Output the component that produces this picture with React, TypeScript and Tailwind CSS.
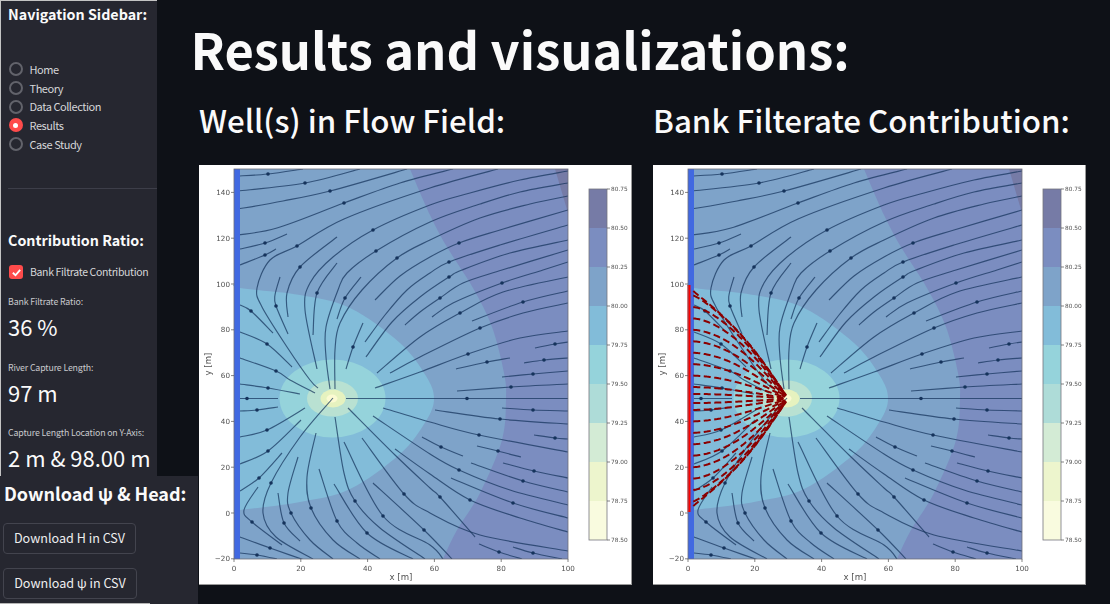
import React from "react";

const FONT = "font-['Noto_Sans_CJK_SC','Source_Sans_Pro',sans-serif]";

// ---------- flow-field chart (all coordinates are in page pixels of the picture) ----------
const toX = (px: number) => (px - 234) / 3.34;
const toY = (py: number) => (513 - py) / 2.29;
const fromX = (x: number) => 234 + 3.34 * x;
const fromY = (y: number) => 513 - 2.29 * y;
const K = 53.4;

function vel(x: number, y: number): [number, number] {
  const a = x - 30, b = y - 50, c = x + 30;
  const r1 = a * a + b * b, r2 = c * c + b * b;
  return [-1 + K * (-a / r1 + c / r2), K * (-b / r1 + b / r2)];
}

function trace(sx: number, sy: number): [number, number][] {
  let x = toX(sx), y = toY(sy);
  const out: [number, number][] = [[sx, sy]];
  for (let i = 0; i < 900; i++) {
    const [u, v] = vel(x, y);
    const n = Math.hypot(u * 3.34, v * 2.29) || 1;
    const h = 1.5 / n;
    const [u2, v2] = vel(x + (u * h) / 2, y + (v * h) / 2);
    x += u2 * h;
    y += v2 * h;
    if (x > 100 || y < -20 || y > 150) break;
    if (Math.hypot(x - 30, y - 50) < 1.2) break;
    out.push([fromX(x), fromY(y)]);
  }
  return out;
}

type P = [number, number];
const toD = (p: P[]) => p.map((q, i) => `${i ? "L" : "M"}${q[0].toFixed(1)} ${q[1].toFixed(1)}`).join("");

function smooth(p: P[]) {
  let d = `M${p[0][0]} ${p[0][1]}`;
  for (let i = 0; i < p.length - 1; i++) {
    const a = p[Math.max(i - 1, 0)], b = p[i], c = p[i + 1], e = p[Math.min(i + 2, p.length - 1)];
    d += `C${(b[0] + (c[0] - a[0]) / 6).toFixed(1)} ${(b[1] + (c[1] - a[1]) / 6).toFixed(1)} ${(c[0] - (e[0] - b[0]) / 6).toFixed(1)} ${(c[1] - (e[1] - b[1]) / 6).toFixed(1)} ${c[0]} ${c[1]}`;
  }
  return d;
}

const STREAMS: P[][] = [
  [[238,176],[268,174],[303,169]],
  [[238,191],[305,183],[360,169]],
  [[238,209],[283,201],[330,191],[407,169]],
  [[238,235],[277,228],[344,203],[400,183],[453,169]],
  [[240,249],[265,243],[287,234]],
  [[240,265],[265,255],[276,249]],
  [[498,169],[430,188],[344,219],[297,246],[270,260],[257,288],[262,307],[287,347],[310,380],[318,388]],
  [[568,171],[520,180],[470,193],[430,205],[373,230],[333,257],[310,283],[305,310],[317,369]],
  [[568,183],[520,192],[480,204],[430,222],[376,251],[347,273],[338,290],[326,327],[326,357],[330,389]],
  [[568,196],[530,204],[480,218],[430,240],[397,258],[362,290],[340,323],[335,350],[335,389]],
  [[568,210],[500,230],[459,243],[430,257],[400,276],[375,300]],
  [[568,225],[500,245],[449,262],[430,273],[407,290],[385,315],[365,342]],
  [[568,240],[510,253],[462,270],[449,277],[420,297],[392,322],[366,357]],
  [[568,250],[502,270],[463,283],[440,298],[420,312],[405,325]],
  [[568,262],[543,270],[502,283],[453,303],[432,317]],
  [[568,277],[503,292],[460,313],[420,337],[377,373]],
  [[568,291],[523,302],[472,321]],
  [[568,303],[523,313],[480,328],[420,357],[390,373]],
  [[568,331],[520,338],[468,354],[420,372],[375,388]],
  [[510,358],[487,362],[456,369]],
  [[568,342],[555,344],[535,348]],
  [[568,358],[544,360],[524,363]],
  [[568,371],[533,374],[502,377]],
  [[568,384],[511,387],[457,391]],
  [[568,398.5],[346,398.5]],
  [[337,237],[300,267],[287,293],[288,317]],
  [[280,277],[275,295],[276,306],[288,334]],
  [[337,263],[317,293],[313,335]],
  [[361,277],[345,298],[337,319]],
  [[363,323],[353,347],[346,369]],
  [[240,305],[251,311],[273,333]],
  [[240,332],[267,344],[292,367]],
  [[240,358],[276,371],[290,380],[315,393]],
  [[240,384],[268,388],[300,394]],
  [[240,398.5],[278,398.5]],
  [[240,411],[257,410],[278,407]],
  [[240,437],[267,430],[305,408]],
  [[240,464],[268,451],[301,420]],
  [[240,491],[259,478],[282,453]],
  [[258,487],[244,510],[252,522],[282,545]],
  [[333,398],[300,437],[271,483],[263,513],[276,537],[313,559]],
  [[278,493],[284,523],[300,541]],
  [[298,457],[288,493],[291,513],[310,540],[333,559]],
  [[316,433],[307,477],[311,508],[333,540],[360,559]],
  [[319,469],[337,521],[357,543],[380,559]],
  [[334,484],[367,533],[413,559]],
  [[335,417],[344,473],[355,501],[380,528],[425,559]],
  [[344,442],[383,516],[430,545],[443,559]],
  [[373,483],[424,530],[452,559]],
  [[362,438],[404,494],[430,513],[480,535],[568,551]],
  [[348,408],[395,455],[430,488],[440,497],[475,537]],
  [[373,416],[430,454],[459,470],[510,490],[568,505]],
  [[395,449],[430,474],[470,500],[520,518],[568,532]],
  [[451,478],[513,503],[568,518]],
  [[471,463],[523,481],[568,492]],
  [[503,463],[534,471],[568,478]],
  [[477,446],[498,451],[521,457]],
  [[534,435],[555,438],[568,439]],
  [[422,437],[441,447],[463,456]],
  [[435,410],[500,419],[568,424]],
  [[502,408],[533,410],[568,411]],
  [[383,408],[430,422],[479,435],[568,452]],
  [[240,537],[270,548],[313,563]],
  [[240,553],[257,555],[277,559]],
  [[479,544],[499,552],[522,559]],
  [[513,547],[533,553],[562,559]],
];

const DOTS: P[] = [
  [268,174],[305,183],[330,191],[344,203],[265,243],[265,255],[297,246],[373,230],[376,251],[397,258],
  [459,243],[449,262],[449,277],[440,298],[460,313],[502,283],[523,302],[480,328],[468,354],[487,362],
  [555,344],[544,360],[533,374],[511,387],[467,398.5],[300,267],[276,306],[317,293],[345,298],[353,347],
  [251,311],[267,344],[276,371],[268,388],[247,398.5],[257,410],[267,430],[268,451],[259,478],[252,522],
  [271,483],[284,523],[291,513],[311,508],[337,521],[367,533],[355,501],[383,516],[424,530],[404,494],
  [440,497],[459,470],[470,500],[513,503],[523,481],[534,471],[498,451],[555,438],[441,447],[500,419],
  [533,410],[479,435],[270,548],[257,555],[499,552],[533,553],
];

const streamPaths = STREAMS.map(smooth);
const captureYs = [97, 95, 90, 85, 80, 75, 70, 65, 60, 55, 52, 48, 45, 40, 35, 30, 25, 20, 15, 10, 5, 3];
const capturePaths = captureYs.map((y) => toD(trace(fromX(1.6), fromY(y))));

const c80 = smooth([[234,284],[240,288],[300,295],[350,308],[400,343],[426,376],[434,398.5],[426,421],[400,454],[350,489],[300,502],[240,510],[234,511]]) + "Z";
const c8025 = smooth([[410,169],[430,215],[447,247],[473,288],[492,327],[504,373],[506,398],[502,440],[480,493],[457,530],[443,559]]) + "L568 559L568 169Z";

const LEVELS = ["#767ba6", "#7b8dc0", "#7ea3c9", "#82bcd9", "#95d3db", "#aedcd8", "#d3ebd5", "#edf5cd", "#f9fbdf"];
const CB = ["80.75", "80.50", "80.25", "80.00", "79.75", "79.50", "79.25", "79.00", "78.75", "78.50"];
const XT = [0, 20, 40, 60, 80, 100];
const YT = [-20, 0, 20, 40, 60, 80, 100, 120, 140];
const TICK = "#505050";
const SANS = "'DejaVu Sans', sans-serif";

function FlowChart({ capture, id }: { capture?: boolean; id: string }) {
  return (
    <svg width="433" height="420" viewBox="199 165 433 420" className="block blur-[0.5px]" fontFamily={SANS}>
      <defs>
        <clipPath id={id}><rect x="234" y="169" width="334" height="390" /></clipPath>
      </defs>
      <rect x="234" y="169" width="334" height="390" fill="#7ea3c9" />
      <path d={c8025} fill="#7b8dc0" />
      <path d="M555 169L568 213L568 169Z" fill="#767ba6" />
      <path d={c80} fill="#82bcd9" />
      <ellipse cx="332.5" cy="398.5" rx="53" ry="39" fill="#95d3db" />
      <ellipse cx="332.5" cy="398.5" rx="25.5" ry="18" fill="#b9e1d2" />
      <ellipse cx="333" cy="398.5" rx="12.5" ry="9" fill="#e6f2bf" />
      <ellipse cx="332" cy="398.5" rx="5.5" ry="4" fill="#fbfad2" />
      <g fill="none" stroke="#15335c" strokeOpacity="0.72" strokeWidth="1.15" clipPath={`url(#${id})`}>
        {streamPaths.map((d, i) => <path key={i} d={d} />)}
      </g>
      <g fill="#15335c">
        {DOTS.map((p, i) => <circle key={i} cx={p[0]} cy={p[1]} r="1.8" />)}
      </g>
      <rect x="234" y="169" width="6" height="390" fill="#4169e1" />
      {capture && (
        <>
          <g fill="none" stroke="#8b0000" strokeWidth="2" strokeDasharray="7 3.5">
            {capturePaths.map((d, i) => <path key={i} d={d} />)}
          </g>
          <rect x="233.5" y="285" width="3" height="227" fill="#ff0000" />
        </>
      )}
      <rect x="234" y="169" width="334" height="390" fill="none" stroke="#6e6e78" strokeWidth="0.8" />
      {XT.map((t) => (
        <g key={t}>
          <line x1={fromX(t)} x2={fromX(t)} y1="559" y2="562" stroke={TICK} strokeWidth="0.7" />
          <text x={fromX(t)} y="571" textAnchor="middle" fontSize="7.2" fill={TICK}>{t}</text>
        </g>
      ))}
      {YT.map((t) => (
        <g key={t}>
          <line x1="231" x2="234" y1={fromY(t)} y2={fromY(t)} stroke={TICK} strokeWidth="0.7" />
          <text x="230" y={fromY(t) + 2.6} textAnchor="end" fontSize="7.2" fill={TICK}>{t < 0 ? `\u2212${-t}` : t}</text>
        </g>
      ))}
      <text x="401" y="580" textAnchor="middle" fontSize="8.6" fill={TICK}>x [m]</text>
      <text x="211" y="364" textAnchor="middle" fontSize="8.6" fill={TICK} transform="rotate(-90 211 364)">y [m]</text>
      {LEVELS.map((c, i) => (
        <rect key={c} x="589" y={189 + i * 39} width="18" height="39" fill={c} />
      ))}
      <rect x="589" y="189" width="18" height="351" fill="none" stroke="#77777f" strokeWidth="0.8" />
      {CB.map((t, i) => (
        <g key={t}>
          <line x1="607" x2="610" y1={189 + i * 39} y2={189 + i * 39} stroke={TICK} strokeWidth="0.7" />
          <text x="611" y={191 + i * 39} fontSize="5.8" fill={TICK}>{t}</text>
        </g>
      ))}
    </svg>
  );
}

// ---------- sidebar ----------
function Radio({ label, on }: { label: string; on?: boolean }) {
  return (
    <div className="flex h-[18.7px] items-center gap-[7px]">
      {on ? (
        <span className="flex h-[14px] w-[14px] items-center justify-center rounded-full bg-[#ff4b4b]">
          <span className="h-[4.5px] w-[4.5px] rounded-full bg-white" />
        </span>
      ) : (
        <span className="h-[14px] w-[14px] rounded-full border-2 border-[#62636b]" />
      )}
      <span className="text-[11px] leading-none tracking-[-0.45px] text-[#d5d6d8]">{label}</span>
    </div>
  );
}

function Metric({ label, value, gap }: { label: string; value: string; gap: string }) {
  return (
    <div className={gap}>
      <div className="h-[14px] text-[8.8px] leading-[14px] tracking-[-0.15px] whitespace-nowrap text-[#c8c9cc]">{label}</div>
      <div className="h-[34px] text-[22px] leading-[34px] whitespace-nowrap text-[#fafafa]">{value}</div>
    </div>
  );
}

function Sidebar() {
  return (
    <aside className="h-[476px] w-[157px] shrink-0 border-t border-l border-[#c4c4c4] bg-[#262730] pl-[7px]">
      <h2 className="h-[26px] text-[14.3px] leading-[26px] font-bold whitespace-nowrap text-[#fafafa]">Navigation Sidebar:</h2>
      <div className="mt-[33px] pl-[0.5px]">
        {["Home", "Theory", "Data Collection"].map((l) => <Radio key={l} label={l} />)}
        <Radio label="Results" on />
        <Radio label="Case Study" />
      </div>
      <div className="mt-[35px] h-px bg-[#3d3e49]" />
      <h2 className="mt-[38px] h-[26px] text-[14.3px] leading-[26px] font-bold whitespace-nowrap text-[#fafafa]">Contribution Ratio:</h2>
      <div className="mt-[12px] flex items-center gap-[7px] pl-[1px]">
        <span className="flex h-[14px] w-[14px] items-center justify-center rounded-[3px] bg-[#ff4b4b]">
          <svg viewBox="0 0 12 12" width="11" height="11" fill="none" stroke="white" strokeWidth="2"><path d="M2 6.3L4.9 9L10 3.2" /></svg>
        </span>
        <span className="text-[10.5px] leading-none tracking-[-0.35px] whitespace-nowrap text-[#d5d6d8]">Bank Filtrate Contribution</span>
      </div>
      <Metric gap="mt-[16px]" label="Bank Filtrate Ratio:" value="36 %" />
      <Metric gap="mt-[17.5px]" label="River Capture Length:" value="97 m" />
      <Metric gap="mt-[17.5px]" label="Capture Length Location on Y-Axis:" value="2 m & 98.00 m" />
    </aside>
  );
}

function DownloadButton({ label, w }: { label: string; w: string }) {
  return (
    <button className={`h-[31px] ${w} rounded-[4px] border border-[#43444e] bg-[#262730] text-center text-[12.6px] leading-none whitespace-nowrap text-[#eeeeef]`}>
      {label}
    </button>
  );
}

export default function App() {
  return (
    <div className={`relative flex h-[604px] w-[1110px] overflow-hidden bg-[#0e1117] ${FONT}`}>
      <Sidebar />
      <main className="pl-[33.5px]">
        <h1 className="mt-[18px] h-[60px] text-[50.6px] leading-[60px] font-bold whitespace-nowrap text-[#fafafa]">Results and visualizations:</h1>
        <div className="mt-[16.5px] flex gap-[21px] pl-[8.5px]">
          <section className="w-[433px]">
            <h2 className="h-[50px] text-[31.3px] leading-[50px] font-medium whitespace-nowrap text-[#fafafa]">Well(s) in Flow Field:</h2>
            <div className="mt-[20.5px] h-[420px] overflow-hidden border-r border-b border-[#9a9a9a] bg-white"><FlowChart id="clipA" /></div>
          </section>
          <section className="w-[433px]">
            <h2 className="h-[50px] text-[31.3px] leading-[50px] font-medium whitespace-nowrap text-[#fafafa]">Bank Filterate Contribution:</h2>
            <div className="mt-[20.5px] h-[420px] overflow-hidden border-r border-b border-[#9a9a9a] bg-white"><FlowChart capture id="clipB" /></div>
          </section>
        </div>
      </main>
      <div className="absolute bottom-0 left-0 h-[128px] w-[198px] bg-[#262730] pl-[3px]">
        <h2 className="mt-[2px] h-[30px] pl-[1px] text-[18px] leading-[30px] font-bold whitespace-nowrap text-[#fafafa]">Download ψ &amp; Head:</h2>
        <div className="mt-[15px] flex flex-col gap-[14px]">
          <DownloadButton label="Download H in CSV" w="w-[133px]" />
          <DownloadButton label="Download ψ in CSV" w="w-[134px]" />
        </div>
        <div className="mt-[4px] -ml-[3px] h-px w-[150px] bg-[#b5b5b5]" />
      </div>
    </div>
  );
}
